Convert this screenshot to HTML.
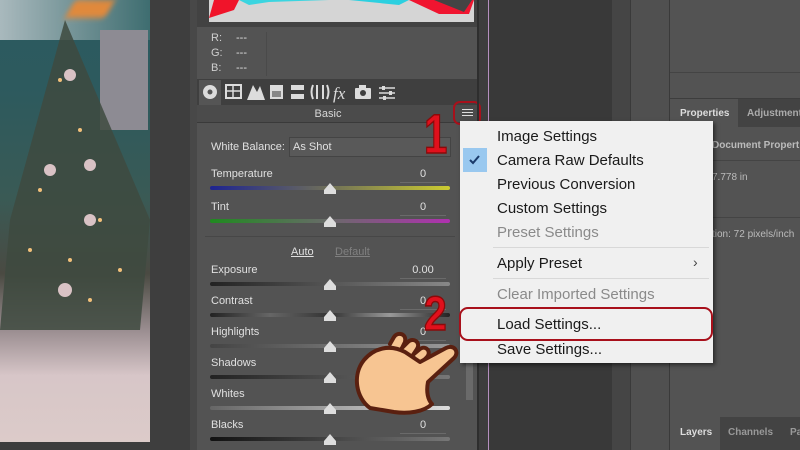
<!DOCTYPE html>
<html><head><meta charset="utf-8"><style>
*{margin:0;padding:0;box-sizing:border-box}
body{width:800px;height:450px;overflow:hidden;position:relative;background:#3d3d3d;font-family:"Liberation Sans",sans-serif}
.a{position:absolute}
.t{position:absolute;color:#e0e0e0;font-size:11px}
.v{position:absolute;color:#e0e0e0;font-size:11px;left:400px;width:46px;text-align:center;border-bottom:1px solid #6a6a6a;height:15px}
.tr{position:absolute;left:210px;width:240px;height:4px;border-radius:2px;background:linear-gradient(90deg,#222,#555,#888)}
.th{position:absolute;width:0;height:0;border-left:6px solid transparent;border-right:6px solid transparent;border-bottom:7px solid #ddd}
.th:after{content:"";position:absolute;left:-6px;top:7px;width:12px;height:4px;background:#ddd}
.mi{position:absolute;left:497px;font-size:15px;color:#1a1a1a}
.dis{color:#8a8a8a}
</style></head><body>
<!-- photo -->
<div class="a" style="left:0;top:0;width:150px;height:442px;background:linear-gradient(180deg,#2c5b60 0%,#2d5a5e 20%,#3a5a55 45%,#4a4a42 62%,#9c8f92 75%,#d7c6c8 85%,#dccbc9 100%)"></div>
<div class="a" style="left:0;top:0;width:150px;height:40px;background:linear-gradient(90deg,#a9b9bd,#3e6d70)"></div>
<div class="a" style="left:70px;top:0;width:40px;height:18px;background:#e0893c;transform:skewX(-30deg);filter:blur(3px)"></div>
<div class="a" style="left:100px;top:30px;width:48px;height:100px;background:#8d8b93"></div>
<svg class="a" style="left:0;top:20px" width="150" height="320"><polygon points="65,0 150,200 140,310 0,310 10,200" fill="#3e4a40" opacity=".85"/>
<g fill="#f2c07a"><circle cx="60" cy="60" r="2"/><circle cx="80" cy="110" r="2"/><circle cx="40" cy="170" r="2"/><circle cx="100" cy="200" r="2"/><circle cx="70" cy="240" r="2"/><circle cx="120" cy="250" r="2"/><circle cx="30" cy="230" r="2"/><circle cx="90" cy="280" r="2"/></g>
<g fill="#d9c2c5"><circle cx="70" cy="55" r="6"/><circle cx="90" cy="145" r="6"/><circle cx="50" cy="150" r="6"/><circle cx="90" cy="200" r="6"/><circle cx="65" cy="270" r="7"/></g></svg>
<div class="a" style="left:150px;top:0;width:40px;height:450px;background:#3e3e3e"></div>
<div class="a" style="left:190px;top:0;width:7px;height:450px;background:#484848"></div>
<!-- panel -->
<div class="a" style="left:197px;top:0;width:280px;height:450px;background:#535353"></div>
<div class="a" style="left:197px;top:0;width:280px;height:27px;background:#424242"></div>
<div class="a" style="left:209px;top:0;width:265px;height:22px;background:#d5d5d5"></div>
<svg class="a" style="left:209px;top:0" width="265" height="22"><path d="M0,18 L5,0 L30,0 L25,10 Z" fill="#f0142a"/><path d="M30,0 L40,5 L60,2 L120,0Z" fill="#3bd5e0"/><path d="M140,0 L190,5 L200,0Z" fill="#2cd0e0"/><path d="M200,0 L230,14 L260,14 L265,0Z" fill="#f01530"/><path d="M225,0 L255,12 L263,0Z" fill="#444"/></svg>
<div class="t" style="left:211px;top:32px;color:#cfcfcf">R:</div><div class="t" style="left:236px;top:32px">---</div>
<div class="t" style="left:211px;top:47px;color:#cfcfcf">G:</div><div class="t" style="left:236px;top:47px">---</div>
<div class="t" style="left:211px;top:62px;color:#cfcfcf">B:</div><div class="t" style="left:236px;top:62px">---</div>
<div class="a" style="left:266px;top:32px;width:1px;height:44px;background:#4a4a4a"></div>
<div class="a" style="left:197px;top:79px;width:280px;height:26px;background:#3f3f3f"></div>
<div class="a" style="left:199px;top:80px;width:22px;height:25px;background:#555"></div>
<svg class="a" style="left:199px;top:80px" width="210" height="25" fill="#dcdcdc">
<circle cx="11" cy="12" r="7"/><circle cx="11" cy="12" r="2.5" fill="#555"/>
<rect x="27" y="5" width="15" height="13" fill="none" stroke="#dcdcdc" stroke-width="2"/><path d="M27,11H42M34,5V18" stroke="#dcdcdc" stroke-width="1.5"/>
<path d="M48,20L54,5L58,12L61,6L66,20Z"/>
<rect x="71" y="5" width="13" height="14"/><rect x="73" y="11" width="9" height="6" fill="#888"/>
<rect x="92" y="5" width="13" height="5"/><rect x="92" y="14" width="13" height="5"/>
<path d="M114,5q-3,7 0,14M118,5v14M124,5v14M128,5q3,7 0,14" stroke="#dcdcdc" stroke-width="2" fill="none"/>
<text x="134" y="19" font-size="17" font-style="italic" font-family="Liberation Serif">fx</text>
<rect x="156" y="8" width="16" height="11" rx="1"/><rect x="160" y="5" width="7" height="4"/><circle cx="164" cy="13" r="3" fill="#3f3f3f"/>
<path d="M180,8h16M180,13h16M180,18h16" stroke="#dcdcdc" stroke-width="1.6"/><rect x="183" y="6" width="3" height="4"/><rect x="190" y="11" width="3" height="4"/><rect x="184" y="16" width="3" height="4"/>
</svg>
<div class="a" style="left:197px;top:105px;width:280px;height:18px;background:#4b4b4b;border-bottom:1px solid #3a3a3a"></div>
<div class="t" style="left:197px;top:108px;width:262px;text-align:center;color:#d8d8d8">Basic</div>
<div class="a" style="left:453px;top:101px;width:28px;height:24px;border:2.5px solid #a8101b;border-radius:7px"></div>
<div class="a" style="left:462px;top:109px;width:11px;height:7px;border-top:1px solid #ddd;border-bottom:1px solid #ddd"></div>
<div class="a" style="left:462px;top:112px;width:11px;height:1px;background:#ddd"></div>
<div class="t" style="left:211px;top:141px">White Balance:</div>
<div class="a" style="left:289px;top:137px;width:162px;height:20px;background:#595959;border:1px solid #444"></div>
<div class="t" style="left:293px;top:141px">As Shot</div>
<div class="t" style="left:211px;top:168px">Temperature</div><div class="v" style="top:168px">0</div>
<div class="tr" style="top:186px;background:linear-gradient(90deg,#1d2390,#707058,#cccc30)"></div><div class="th" style="left:324px;top:183px"></div>
<div class="t" style="left:211px;top:201px">Tint</div><div class="v" style="top:201px">0</div>
<div class="tr" style="top:219px;background:linear-gradient(90deg,#1f8a1f,#6a6a6a,#b030b0)"></div><div class="th" style="left:324px;top:216px"></div>
<div class="a" style="left:205px;top:236px;width:250px;height:1px;background:#474747"></div>
<div class="t" style="left:291px;top:246px;text-decoration:underline">Auto</div>
<div class="t" style="left:335px;top:246px;color:#808080;text-decoration:underline">Default</div>
<div class="t" style="left:211px;top:264px">Exposure</div><div class="v" style="top:264px">0.00</div>
<div class="tr" style="top:282px"></div><div class="th" style="left:324px;top:279px"></div>
<div class="t" style="left:211px;top:295px">Contrast</div><div class="v" style="top:295px">0</div>
<div class="tr" style="top:313px;background:linear-gradient(90deg,#222,#666,#333,#999,#222)"></div><div class="th" style="left:324px;top:310px"></div>
<div class="t" style="left:211px;top:326px">Highlights</div><div class="v" style="top:326px">0</div>
<div class="tr" style="top:344px;background:linear-gradient(90deg,#444,#999)"></div><div class="th" style="left:324px;top:341px"></div>
<div class="t" style="left:211px;top:357px">Shadows</div>
<div class="tr" style="top:375px;background:linear-gradient(90deg,#222,#777)"></div><div class="th" style="left:324px;top:372px"></div>
<div class="t" style="left:211px;top:388px">Whites</div>
<div class="tr" style="top:406px;background:linear-gradient(90deg,#666,#ddd)"></div><div class="th" style="left:324px;top:403px"></div>
<div class="t" style="left:211px;top:419px">Blacks</div><div class="v" style="top:419px">0</div>
<div class="tr" style="top:437px;background:linear-gradient(90deg,#111,#777)"></div><div class="th" style="left:324px;top:434px"></div>
<div class="a" style="left:466px;top:330px;width:7px;height:70px;background:#6a6a6a"></div>
<div class="a" style="left:477px;top:0;width:2px;height:450px;background:#2e2e2e"></div>
<div class="a" style="left:488px;top:0;width:1px;height:450px;background:#b58fbf"></div>
<!-- right area -->
<div class="a" style="left:489px;top:0;width:123px;height:450px;background:#393939"></div>
<div class="a" style="left:612px;top:0;width:18px;height:450px;background:#454545"></div>
<div class="a" style="left:630px;top:0;width:40px;height:450px;background:#505050;border-left:1px solid #3a3a3a;border-right:1px solid #3a3a3a"></div>
<div class="a" style="left:670px;top:0;width:130px;height:72px;background:#535353"></div>
<div class="a" style="left:670px;top:72px;width:130px;height:26px;background:#535353;border-top:1px solid #444"></div>
<div class="a" style="left:670px;top:99px;width:130px;height:28px;background:#434343"></div>
<div class="a" style="left:670px;top:99px;width:68px;height:28px;background:#535353"></div>
<div class="t" style="left:680px;top:108px;font-weight:bold;font-size:10px;color:#ddd">Properties</div>
<div class="t" style="left:747px;top:108px;font-weight:bold;font-size:10px;color:#aaa">Adjustment</div>
<div class="a" style="left:670px;top:127px;width:130px;height:290px;background:#535353"></div>
<div class="t" style="left:712px;top:140px;font-weight:bold;font-size:10px;color:#bbb">Document Propert</div>
<div class="a" style="left:670px;top:160px;width:130px;height:1px;background:#444"></div>
<div class="t" style="left:712px;top:172px;font-size:10px;color:#bbb">7.778 in</div>
<div class="a" style="left:670px;top:217px;width:130px;height:1px;background:#444"></div>
<div class="t" style="left:712px;top:229px;font-size:10px;color:#bbb">tion: 72 pixels/inch</div>
<div class="a" style="left:670px;top:417px;width:130px;height:33px;background:#434343"></div>
<div class="a" style="left:670px;top:417px;width:50px;height:33px;background:#535353"></div>
<div class="t" style="left:680px;top:427px;font-weight:bold;font-size:10px;color:#ddd">Layers</div>
<div class="t" style="left:728px;top:427px;font-weight:bold;font-size:10px;color:#999">Channels</div>
<div class="t" style="left:790px;top:427px;font-weight:bold;font-size:10px;color:#999">Pa</div>
<!-- menu -->
<div class="a" style="left:460px;top:121px;width:253px;height:242px;background:#f0f0f0;box-shadow:2px 2px 4px rgba(0,0,0,.5)"></div>
<div class="a" style="left:463px;top:148px;width:24px;height:24px;background:#99c8ef"></div>
<svg class="a" style="left:463px;top:148px" width="24" height="24"><path d="M7,12l3,3l6,-7" stroke="#1a3a6a" stroke-width="2" fill="none"/></svg>
<div class="mi" style="top:128px">Image Settings</div>
<div class="mi" style="top:152px">Camera Raw Defaults</div>
<div class="mi" style="top:176px">Previous Conversion</div>
<div class="mi" style="top:200px">Custom Settings</div>
<div class="mi dis" style="top:224px">Preset Settings</div>
<div class="a" style="left:493px;top:247px;width:216px;height:1px;background:#d8d8d8"></div>
<div class="mi" style="top:255px">Apply Preset</div>
<div class="mi" style="left:693px;top:254px;font-size:14px;color:#444">›</div>
<div class="a" style="left:493px;top:278px;width:216px;height:1px;background:#d8d8d8"></div>
<div class="mi dis" style="top:286px">Clear Imported Settings</div>
<div class="a" style="left:459px;top:307px;width:254px;height:34px;border:2.5px solid #a8101b;border-radius:9px"></div>
<div class="mi" style="top:316px">Load Settings...</div>
<div class="mi" style="top:341px">Save Settings...</div>
<!-- numbers -->
<div class="a" style="left:424px;top:106px;font-size:56px;font-weight:bold;color:#e0101c;-webkit-text-stroke:1.5px #8a0a0a;line-height:1;transform:scaleX(.75);transform-origin:left top">1</div>
<div class="a" style="left:424px;top:291px;font-size:48px;font-weight:bold;color:#e0101c;-webkit-text-stroke:1.5px #8a0a0a;line-height:1;transform:scaleX(.85);transform-origin:left top">2</div>
<!-- hand -->
<svg class="a" style="left:350px;top:330px" width="110" height="95">
<g fill="#f7c592" stroke="#5a2010" stroke-width="4" stroke-linejoin="round" stroke-linecap="round">
<path d="M40,14 L44,7 C48,1 57,4 55,12 L50,22"/>
<path d="M52,18 L58,12 C63,7 71,12 67,19 L61,28"/>
<path d="M64,24 L70,19 C75,15 82,21 77,27 L70,34"/>
<path d="M20,78 C6,68 2,45 14,30 C24,18 40,14 55,22 L70,32 L96,18 C104,14 110,22 104,28 L78,52 C76,62 78,70 82,74 C74,82 58,84 44,82 Z"/>
</g></svg>
</body></html>
